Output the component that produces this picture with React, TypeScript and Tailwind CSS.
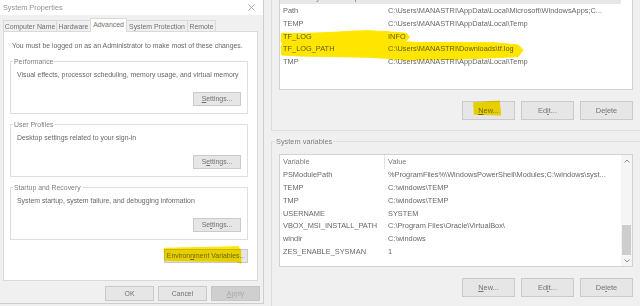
import type {ReactNode} from "react";
import clsx from "clsx";

const userVars: [string, string][] = [
    ["ChocolateyLastPathUpdate", "132515339701784367"],
    ["Path", "C:\\Users\\MANASTRI\\AppData\\Local\\Microsoft\\WindowsApps;C..."],
    ["TEMP", "C:\\Users\\MANASTRI\\AppData\\Local\\Temp"],
    ["TF_LOG", "INFO"],
    ["TF_LOG_PATH", "C:\\Users\\MANASTRI\\Downloads\\tf.log"],
    ["TMP", "C:\\Users\\MANASTRI\\AppData\\Local\\Temp"],
];

const systemVars: [string, string][] = [
    ["PSModulePath", "%ProgramFiles%\\WindowsPowerShell\\Modules;C:\\windows\\syst..."],
    ["TEMP", "C:\\windows\\TEMP"],
    ["TMP", "C:\\windows\\TEMP"],
    ["USERNAME", "SYSTEM"],
    ["VBOX_MSI_INSTALL_PATH", "C:\\Program Files\\Oracle\\VirtualBox\\"],
    ["windir", "C:\\windows"],
    ["ZES_ENABLE_SYSMAN", "1"],
];

const tabs = [
    {label: "Computer Name", w: "w-[54px]"},
    {label: "Hardware", w: "w-[35px]"},
    {label: "Advanced", w: "w-[37px]", active: true},
    {label: "System Protection", w: "w-[62px]"},
    {label: "Remote", w: "w-[29px]"},
];

const WinButton = ({children, className, disabled}: { children: ReactNode; className?: string; disabled?: boolean }) => (
    <button
        className={clsx(
            "flex items-center justify-center border",
            disabled ? "border-[#c6c6c6] bg-[#cfcfcf] text-[#a9a9a9]" : "border-[#cacaca] bg-[#e6e6e6] text-[#727272]",
            className
        )}
    >
        <span className="whitespace-nowrap">{children}</span>
    </button>
);

const Key = ({children}: { children: ReactNode }) => (
    <span className="underline underline-offset-[1px]">{children}</span>
);

const GroupBox = ({title, text, button}: { title: string; text: string; button: ReactNode }) => (
    <fieldset className="ml-[6px] mr-[9px] mt-[6px] border border-[#dedede]">
        <legend className="ml-[2px] px-[1px] text-[#808080]">{title}</legend>
        <div className="mt-[4px] h-[9px] pl-[6px]">{text}</div>
        <div className="mt-[13px] flex justify-end pb-[7px] pr-[6px]">
            <WinButton className="h-[14px] w-[48px]">{button}</WinButton>
        </div>
    </fieldset>
);

const SystemProperties = () => (
    <div className="flex h-[304px] w-[264px] shrink-0 flex-col border-b border-r border-[#cdcdcd] bg-[#f0f0f0] text-[6.9px]">
        <div className="flex h-[15px] shrink-0 items-center justify-between bg-white pl-[3px] pr-[8px] text-[7.3px] text-[#939393]">
            <span>System Properties</span>
            <svg width="7" height="7" viewBox="0 0 7 7">
                <path d="M0.5 0.5L6.5 6.5M6.5 0.5L0.5 6.5" stroke="#9a9a9a" strokeWidth="0.8"/>
            </svg>
        </div>

        <div className="flex h-[16px] shrink-0 items-end pl-[3px]">
            {tabs.map((tab) => (
                <div
                    key={tab.label}
                    className={clsx(
                        "relative -mr-px flex items-center justify-center border border-b-0 border-[#d9d9d9] text-[#707070]",
                        tab.w,
                        tab.active ? "z-10 -mb-px h-[14px] bg-white pb-[2px]" : "h-[11px] bg-[#f0f0f0]"
                    )}
                >
                    {tab.label}
                </div>
            ))}
        </div>

        <div className="ml-[3px] flex h-[250px] w-[255px] shrink-0 flex-col border border-[#d9d9d9] bg-white">
            <p className="mt-[9px] h-[9px] pl-[8px]">You must be logged on as an Administrator to make most of these changes.</p>
            <div className="mt-[0.5px]">
                <GroupBox
                    title="Performance"
                    text="Visual effects, processor scheduling, memory usage, and virtual memory"
                    button={<><Key>S</Key>ettings...</>}
                />
                <GroupBox
                    title="User Profiles"
                    text="Desktop settings related to your sign-in"
                    button={<>S<Key>e</Key>ttings...</>}
                />
                <GroupBox
                    title="Startup and Recovery"
                    text="System startup, system failure, and debugging information"
                    button={<>Se<Key>t</Key>tings...</>}
                />
            </div>
            <div className="mr-[9px] mt-[9px] flex justify-end">
                <WinButton className="h-[14px] w-[84px]">Environ<Key>n</Key>ment Variables...</WinButton>
            </div>
        </div>

        <div className="mt-[5px] flex justify-end gap-[4px] pr-[3px]">
            <WinButton className="h-[15px] w-[49px]">OK</WinButton>
            <WinButton className="h-[15px] w-[49px]">Cancel</WinButton>
            <WinButton className="h-[15px] w-[49px]" disabled><Key>A</Key>pply</WinButton>
        </div>
    </div>
);

const VarList = ({rows, selected, scrollbar}: { rows: [string, string][]; selected?: number; scrollbar?: boolean }) => (
    <div className="ml-[7px] flex h-[113px] w-[354px] border border-[#d2d2d2] bg-white">
        <div className="flex min-w-0 flex-1 flex-col">
            <div className="flex h-[13.6px] shrink-0 items-center text-[#7a7a7a]">
                <div className="h-full w-[105px] shrink-0 border-r border-[#e4e4e4] pl-[3px] leading-[13.6px]">Variable</div>
                <div className="pl-[3px]">Value</div>
            </div>
            {rows.map(([name, value], i) => (
                <div
                    key={name + i}
                    className={clsx("flex h-[12.75px] shrink-0 items-center", i === selected && "bg-[#e8e8e8]")}
                >
                    <div className="w-[105px] shrink-0 overflow-hidden pl-[3px]">{name}</div>
                    <div className="overflow-hidden pl-[3px]">{value}</div>
                </div>
            ))}
        </div>
        {scrollbar ? (
            <div className="flex w-[11px] shrink-0 flex-col bg-[#f5f5f5]">
                <div className="flex h-[11px] items-center justify-center">
                    <svg width="6" height="4" viewBox="0 0 6 4">
                        <path d="M0.5 3.5L3 1L5.5 3.5" fill="none" stroke="#707070" strokeWidth="0.8"/>
                    </svg>
                </div>
                <div className="flex flex-1 flex-col justify-end px-[1px]">
                    <div className="h-[30px] bg-[#cdcdcd]"/>
                </div>
                <div className="flex h-[11px] items-center justify-center">
                    <svg width="6" height="4" viewBox="0 0 6 4">
                        <path d="M0.5 0.5L3 3L5.5 0.5" fill="none" stroke="#707070" strokeWidth="0.8"/>
                    </svg>
                </div>
            </div>
        ) : (
            <div className="w-[11px] shrink-0 bg-white"/>
        )}
    </div>
);

const ListButtons = () => (
    <div className="ml-[7px] mt-[11px] flex w-[354px] justify-end gap-[6px]">
        <WinButton className="h-[19px] w-[53px]"><Key>N</Key>ew...</WinButton>
        <WinButton className="h-[19px] w-[53px]">Ed<Key>i</Key>t...</WinButton>
        <WinButton className="h-[19px] w-[53px]">De<Key>l</Key>ete</WinButton>
    </div>
);

const EnvironmentVariables = () => (
    <div className="h-[306px] min-w-0 flex-1 overflow-hidden bg-[#f0f0f0] pl-[7px]">
        <fieldset className="-mt-[39px] w-[380px] border border-[#dedede] pb-[10px]">
            <legend className="ml-[3px] px-[1px] text-[#808080]">User variables for MANASTRI</legend>
            <div className="mt-[7px]">
                <VarList rows={userVars} selected={0}/>
            </div>
            <ListButtons/>
        </fieldset>
        <fieldset className="mt-[6px] w-[380px] border border-[#dedede] pb-[10px]">
            <legend className="ml-[3px] px-[1px] text-[#808080]">System variables</legend>
            <div className="mt-[8px]">
                <VarList rows={systemVars} scrollbar/>
            </div>
            <ListButtons/>
        </fieldset>
    </div>
);

const Highlights = () => (
    <svg className="pointer-events-none absolute inset-0 mix-blend-multiply" width="640" height="306" viewBox="0 0 640 306">
        <g fill="#ffe600" stroke="#ffe600" strokeWidth="1" strokeLinejoin="round">
            <polygon
                points="281.7,33.3 300,33.5 330,32.5 355,31 368,30.7 388,31.7 406.7,33.3 409.5,37.3 405,41.7 420,42.5 495,42.7 518.3,45 523.3,50 518,56.7 455,59.3 405,60 371.7,57.3 338,56.7 300,56 281.7,55 281,46 283,44 281,41"/>
            <polygon points="473.7,102.7 499.3,101 500.7,115 474.3,114.3"/>
            <polygon points="164,248.3 238.3,246.7 240.7,250 241,263.3 236,261.5 165,260.7"/>
        </g>
    </svg>
);

export default function App() {
    return (
        <div className="relative flex h-[306px] w-[640px] items-start overflow-hidden whitespace-nowrap bg-[#f0f0f0] font-['Liberation_Sans',Arial,sans-serif] text-[7.4px] leading-[9px] text-[#676767]">
            <SystemProperties/>
            <EnvironmentVariables/>
            <Highlights/>
        </div>
    );
}
